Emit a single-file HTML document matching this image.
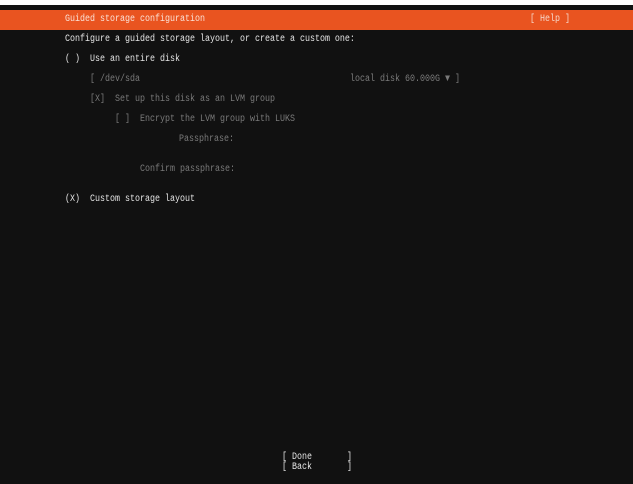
<!DOCTYPE html>
<html><head><meta charset="utf-8"><style>
html,body{margin:0;padding:0;}
body{width:633px;height:484px;background:#111111;position:relative;overflow:hidden;
font-family:"Liberation Mono","DejaVu Sans Mono",monospace;font-size:10px;}
.top{position:absolute;left:0;top:0;width:633px;height:5px;background:#fff;}
.bar{position:absolute;left:0;top:10px;width:633px;height:20px;background:#e95420;}
.t{position:absolute;white-space:pre;line-height:10px;height:10px;color:#e6e6e6;transform:scaleX(0.833);transform-origin:0 50%;}
.d{color:#7a7a7a;}
.h{color:#f6d9cc;}
</style></head><body>
<div class="top"></div>
<div class="bar"></div>
<div class="t h" style="left:65px;top:15px;color:#fbe3d8">Guided storage configuration</div>
<div class="t h" style="left:530px;top:15px">[ Help ]</div>
<div class="t" style="left:65px;top:35px">Configure a guided storage layout, or create a custom one:</div>
<div class="t" style="left:65px;top:55px">( )  Use an entire disk</div>
<div class="t d" style="left:90px;top:75px">[ /dev/sda</div>
<div class="t d" style="left:350px;top:75px">local disk 60.000G ▼ ]</div>
<div class="t d" style="left:90px;top:95px">[X]  Set up this disk as an LVM group</div>
<div class="t d" style="left:115px;top:115px">[ ]  Encrypt the LVM group with LUKS</div>
<div class="t d" style="left:179px;top:135px">Passphrase:</div>
<div class="t d" style="left:140px;top:165px">Confirm passphrase:</div>
<div class="t" style="left:65px;top:195px">(X)  Custom storage layout</div>
<div class="t" style="left:282px;top:453px">[ Done       ]</div>
<div class="t" style="left:282px;top:463px">[ Back       ]</div>
</body></html>
